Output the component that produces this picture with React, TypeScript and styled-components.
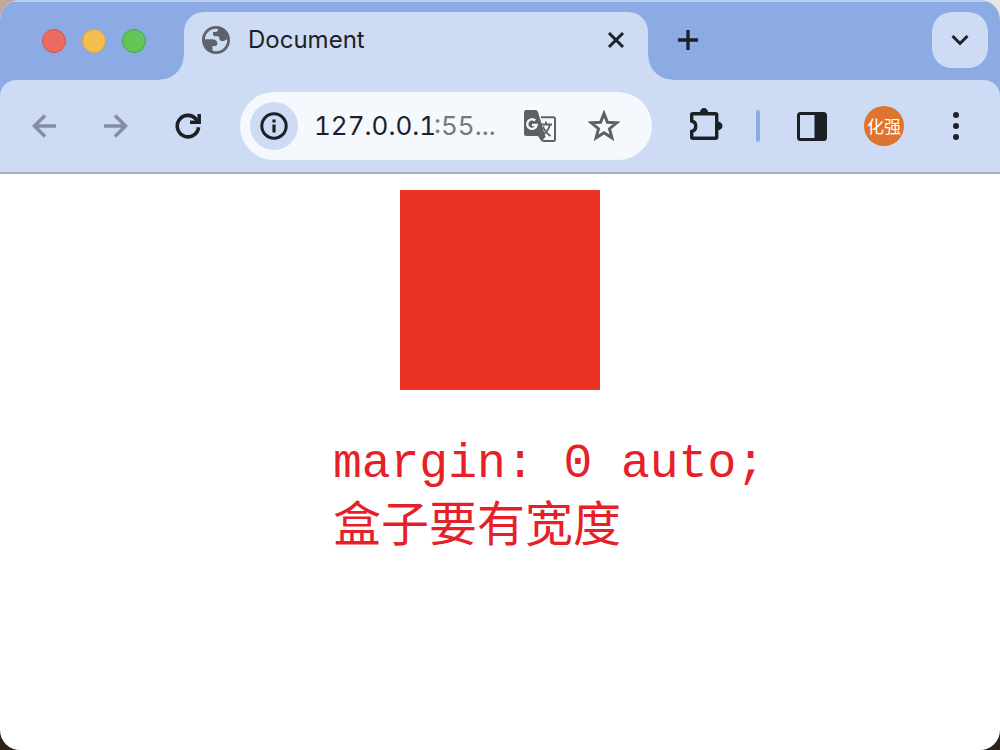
import React from 'react';
import styled, { createGlobalStyle } from 'styled-components';

const ink = '#1d2126';
const strip = '#8cabe4';
const surface = '#cedbf4';

const GlobalStyle = createGlobalStyle`
  * { box-sizing: border-box; }
  body {
    margin: 0;
    background: linear-gradient(90deg, #c2a79c, #e8e6e4) top / 100% 40px no-repeat, #2c2017;
    font-family: Inter, "Noto Sans CJK SC", sans-serif;
    color: ${ink};
  }
`;

const Window = styled.div`
  min-height: 100vh;
  display: flex;
  flex-direction: column;
  background: #fff;
  border-radius: 20px;
  overflow: hidden;
`;

const Chrome = styled.header`
  background: ${strip};
  border-top: 2px solid #bcd0f2;
`;

const TabStrip = styled.div`
  height: 78px;
  display: flex;
  align-items: flex-start;
  padding: 10px 12px 0 42px;
`;

const Lights = styled.div`
  display: flex;
  gap: 16px;
  width: 142px;
  flex: none;
  padding-top: 17px;
`;

const Light = styled.button<{ $fill: string; $edge: string }>`
  width: 24px;
  height: 24px;
  padding: 0;
  border-radius: 50%;
  border: 1px solid ${(p) => p.$edge};
  background: ${(p) => p.$fill};
`;

const Tab = styled.div`
  position: relative;
  flex: 0 1 464px;
  min-width: 0;
  height: 68px;
  display: flex;
  align-items: flex-start;
  padding: 12px 16px 0;
  background: ${surface};
  border-radius: 20px 20px 0 0;

  &::before,
  &::after {
    content: '';
    position: absolute;
    bottom: 0;
    width: 24px;
    height: 24px;
  }
  &::before {
    right: 100%;
    background: radial-gradient(circle at 0 0, transparent 23px, ${surface} 24px);
  }
  &::after {
    left: 100%;
    background: radial-gradient(circle at 100% 0, transparent 23px, ${surface} 24px);
  }
`;

const TabTitle = styled.span`
  flex: 1;
  min-width: 0;
  margin-left: 16px;
  font-size: 24px;
  line-height: 32px;
  overflow: hidden;
  white-space: nowrap;
`;

const IconButton = styled.button<{ $width?: number; $height?: number }>`
  flex: none;
  display: flex;
  align-items: center;
  justify-content: center;
  width: ${(p) => p.$width ?? 32}px;
  height: ${(p) => p.$height ?? 32}px;
  padding: 0;
  border: 0;
  background: none;
  color: inherit;
`;

const NewTab = styled(IconButton)`
  margin: 12px auto 0 24px;
`;

const TabSearch = styled(IconButton)`
  border-radius: 20px;
  background: ${surface};
`;

const Toolbar = styled.div`
  height: 94px;
  display: flex;
  align-items: center;
  padding: 0 28px;
  background: ${surface};
  border-radius: 16px 16px 0 0;
  border-bottom: 2px solid #a5afc6;
`;

const Navigation = styled.nav`
  display: flex;
  gap: 40px;
  margin-right: 36px;
`;

const AddressBar = styled.div`
  flex: 1;
  min-width: 0;
  height: 68px;
  display: flex;
  align-items: center;
  padding: 0 32px 0 10px;
  border-radius: 34px;
  background: #f5f8fd;
`;

const SiteInfo = styled(IconButton)`
  border-radius: 50%;
  background: ${surface};
`;

const Address = styled.label`
  flex: 1;
  min-width: 0;
  display: flex;
  margin-left: 16px;
  font-size: 26px;
  font-variant-numeric: tabular-nums;
  line-height: 36px;
  color: #75797e;
  white-space: nowrap;
  overflow: hidden;
`;

const Host = styled.input`
  width: 120px;
  height: 36px;
  padding: 0;
  border: 0;
  outline: 0;
  background: none;
  color: ${ink};
  font: inherit;
  font-variant-numeric: inherit;
`;

const PageActions = styled.div`
  flex: none;
  display: flex;
  gap: 32px;
  color: #5d6064;
`;

const Tools = styled.div`
  flex: none;
  display: flex;
  align-items: center;
  margin-left: 34px;
`;

const Divider = styled.span`
  width: 4px;
  height: 32px;
  margin: 0 36px 0 30px;
  border-radius: 2px;
  background: ${strip};
`;

const Avatar = styled.button`
  width: 40px;
  height: 40px;
  margin: 0 36px;
  padding: 0;
  border: 0;
  border-radius: 50%;
  background: #de742d;
  color: #fff;
  font-family: "Noto Sans CJK SC", sans-serif;
  font-size: 17px;
  line-height: 40px;
`;

const Page = styled.main`
  flex: 1;
  padding: 16px;
`;

const Box = styled.div`
  width: 200px;
  height: 200px;
  margin: 0 auto;
  background: #ea3323;
`;

const Note = styled.p`
  width: fit-content;
  margin: 42px auto 0;
  padding-left: 98px;
  color: #e61f29;
  font-family: "Liberation Mono", "Noto Sans CJK SC", monospace;
  font-size: 48px;
  line-height: 64px;
`;

const Line = styled.span`
  display: block;
`;

const Icon = ({ size = 32, children }: { size?: number; children: React.ReactNode }) => (
  <svg width={size} height={size} viewBox={`0 0 ${size} ${size}`} fill="none" stroke="currentColor" strokeWidth="3" aria-hidden="true">
    {children}
  </svg>
);

export default function App() {
  return (
    <>
      <GlobalStyle />
      <Window>
        <Chrome>
          <TabStrip>
            <Lights>
              <Light aria-label="Close window" $fill="#ed6a5e" $edge="#d1564c" />
              <Light aria-label="Minimize window" $fill="#f5bf4f" $edge="#d9a33f" />
              <Light aria-label="Zoom window" $fill="#61c654" $edge="#4ba73f" />
            </Lights>
            <Tab>
              <Icon>
                <circle cx="16" cy="16" r="12.6" stroke="#5d6469" strokeWidth="2.8" />
                <path
                  d="M3 15.300h9.500c2.900 0 4.900 1.700 4.800 4.200 0 1.400-.9 2.300-2.400 2.400h-2.400v5.900C7.500 28 2.500 22.500 3 15.300z"
                  fill="#5d6469"
                  stroke="none"
                />
                <path
                  d="M18 3v2.500c0 1.300-1 2.400-2.400 2.400h-2.600v2.400c0 1.300 1 2 2.300 2h2.400c1.200 0 1.500.9 1.500 2s1 2.700 2.600 2.700h2c1.100 0 1.900-1.300 3-1.500h2.200C28.500 8 23.500 3.200 18 3z"
                  fill="#5d6469"
                  stroke="none"
                />
              </Icon>
              <TabTitle>Document</TabTitle>
              <IconButton aria-label="Close tab">
                <Icon>
                  <path d="M9 9l14 14M23 9L9 23" />
                </Icon>
              </IconButton>
            </Tab>
            <NewTab aria-label="New tab">
              <Icon>
                <path d="M16 6v20M6 16h20" strokeWidth="3.300" />
              </Icon>
            </NewTab>
            <TabSearch aria-label="Search tabs" $width={56} $height={56}>
              <Icon>
                <path d="M8.500 12l7.500 7.500 7.500-7.500" />
              </Icon>
            </TabSearch>
          </TabStrip>
          <Toolbar>
            <Navigation>
              <IconButton aria-label="Back">
                <Icon>
                  <path d="M28 16H6.500M17 5.500L6.500 16l10.500 10.500" stroke="#848da1" strokeWidth="3.500" />
                </Icon>
              </IconButton>
              <IconButton aria-label="Forward">
                <Icon>
                  <path d="M4 16h21.500M15 5.500l10.500 10.500-10.500 10.500" stroke="#848da1" strokeWidth="3.500" />
                </Icon>
              </IconButton>
              <IconButton aria-label="Reload">
                <Icon>
                  <path d="M26.600 17.200A10.700 10.700 0 1 1 24 9l2.500 3" strokeWidth="3.600" />
                  <path d="M18 12.300h9.200V4" strokeWidth="3.500" />
                </Icon>
              </IconButton>
            </Navigation>
            <AddressBar>
              <SiteInfo aria-label="View site information" $width={48} $height={48}>
                <Icon>
                  <circle cx="16" cy="16" r="12.200" />
                  <path d="M16 14.500v8M16 9.500v3" strokeWidth="3.200" />
                </Icon>
              </SiteInfo>
              <Address>
                <Host aria-label="Address" defaultValue="127.0.0.1" />
                <span>:55...</span>
              </Address>
              <PageActions>
                <IconButton aria-label="Translate this page">
                  <Icon>
                    <path d="M17 7.300h12.500a1.500 1.500 0 0 1 1.500 1.500v20.700a1.500 1.500 0 0 1-1.500 1.500H18.500" strokeWidth="2" />
                    <path d="M2.500 0h9a2.500 2.500 0 0 1 2.400 1.700L21.500 27l-4 4.500-3.500-5.500H2.500A2.500 2.500 0 0 1 0 23.500v-21A2.500 2.500 0 0 1 2.500 0z" fill="currentColor" stroke="none" />
                    <path d="M16.500 14.500h11.500M22 11.500v3M19 16.500c1.500 4 4.500 7.500 7.500 9.500M26 14.500c-1 4.500-4 8-7.500 11" strokeWidth="1.800" />
                    <path d="M11.200 10.500A4.800 4.800 0 1 0 12.700 15H8" stroke="#f5f8fd" strokeWidth="2.400" />
                  </Icon>
                </IconButton>
                <IconButton aria-label="Bookmark this tab">
                  <Icon>
                    <path d="M16 3.500l3.400 8.800 9.300.5-7.200 5.900 2.400 9.100-7.900-5.100-7.900 5.100 2.400-9.100-7.200-5.900 9.300-.5z" />
                  </Icon>
                </IconButton>
              </PageActions>
            </AddressBar>
            <Tools>
              <IconButton aria-label="Extensions" $width={40} $height={40}>
                <Icon size={40}>
                  <path d="M6.700 7.800h23a1 1 0 0 1 1 1v22.500a1 1 0 0 1-1 1h-23a1 1 0 0 1-1-1V25.300a5.300 5.300 0 0 0 0-10.300V8.800a1 1 0 0 1 1-1z" strokeWidth="3.400" />
                  <path d="M13.800 7a4.200 5 0 0 1 8.400 0zM31.500 15.500a5 4.400 0 0 1 0 8.800z" fill="currentColor" stroke="none" />
                </Icon>
              </IconButton>
              <Divider />
              <IconButton aria-label="Side panel">
                <Icon>
                  <rect x="2.500" y="3.500" width="27" height="26" rx="2" />
                  <path d="M18.500 3h11v27h-11z" fill="currentColor" stroke="none" />
                </Icon>
              </IconButton>
              <Avatar aria-label="Profile">化强</Avatar>
              <IconButton aria-label="Menu">
                <Icon>
                  <path d="M16 5v.01M16 16v.01M16 27v.01" strokeWidth="6" strokeLinecap="round" />
                </Icon>
              </IconButton>
            </Tools>
          </Toolbar>
        </Chrome>
        <Page>
          <Box />
          <Note>
            <Line>margin: 0 auto;</Line>
            <Line>盒子要有宽度</Line>
          </Note>
        </Page>
      </Window>
    </>
  );
}
